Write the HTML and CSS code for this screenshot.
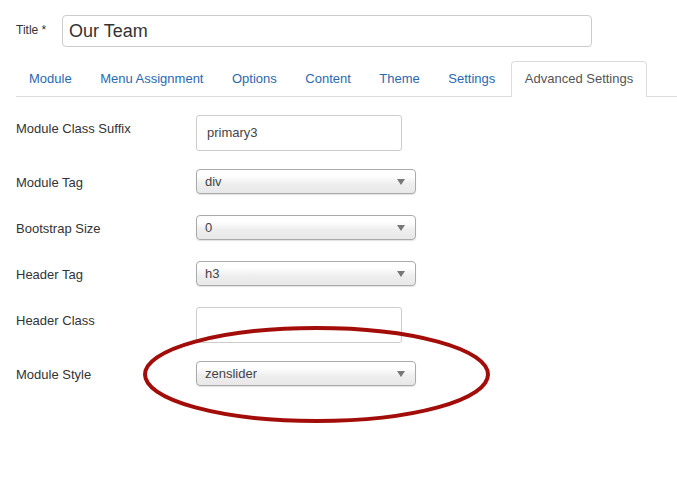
FILE: index.html
```html
<!DOCTYPE html>
<html>
<head>
<meta charset="utf-8">
<link rel="stylesheet" href="styles.css">
</head>
<body>
<div class="page">
  <div class="title-row">
    <label class="title-label">Title *</label>
    <div class="title-input">Our Team</div>
  </div>
  <ul class="tabs">
    <li class="tab">Module</li>
    <li class="tab">Menu Assignment</li>
    <li class="tab">Options</li>
    <li class="tab">Content</li>
    <li class="tab">Theme</li>
    <li class="tab">Settings</li>
    <li class="tab active">Advanced Settings</li>
  </ul>
  <div class="form">
    <div class="row">
      <div class="label">Module Class Suffix</div>
      <div class="text-input">primary3</div>
    </div>
    <div class="row sel">
      <div class="label">Module Tag</div>
      <div class="select"><span>div</span><i class="arrow"></i></div>
    </div>
    <div class="row sel">
      <div class="label">Bootstrap Size</div>
      <div class="select"><span>0</span><i class="arrow"></i></div>
    </div>
    <div class="row sel">
      <div class="label">Header Tag</div>
      <div class="select"><span>h3</span><i class="arrow"></i></div>
    </div>
    <div class="row">
      <div class="label">Header Class</div>
      <div class="text-input"></div>
    </div>
    <div class="row sel">
      <div class="label">Module Style</div>
      <div class="select"><span>zenslider</span><i class="arrow"></i></div>
    </div>
  </div>
  <svg class="circle" width="349" height="100" viewBox="0 0 349 100">
    <ellipse cx="174.5" cy="49.5" rx="171.5" ry="46.5" fill="none" stroke="#a30d09" stroke-width="4"/>
  </svg>
</div>
</body>
</html>
```

FILE: styles.css
```css
* { box-sizing: border-box; }
html, body { margin: 0; padding: 0; background: #fff; }
body {
  font-family: "Liberation Sans", Arial, sans-serif;
  color: #333;
  font-size: 13px;
}
.page {
  position: relative;
  width: 677px;
  height: 501px;
  padding: 15px 0 0 16px;
}
.title-row {
  display: flex;
  align-items: center;
  height: 32px;
}
.title-label {
  width: 46px;
  font-size: 12px;
  color: #333;
  padding-bottom: 2px;
}
.title-input {
  width: 530px;
  height: 32px;
  border: 1px solid #ccc;
  border-radius: 4px;
  font-size: 18px;
  line-height: 30px;
  padding-left: 6px;
  color: #333;
}
.tabs {
  list-style: none;
  margin: 14px 0 0 0;
  padding: 0;
  display: flex;
  border-bottom: 1px solid #ddd;
  height: 36px;
}
.tab {
  padding: 0 12px;
  margin-right: 2.5px;
  line-height: 34px;
  color: #2a69b1;
  border: 1px solid transparent;
  border-bottom: none;
  border-radius: 4px 4px 0 0;
  height: 36px;
}
.tab.active {
  color: #555;
  border-color: #ddd;
  background: #fff;
  padding: 0 13px;
}
.form {
  margin-top: 18px;
  display: flex;
  flex-direction: column;
  gap: 18px;
}
.row {
  display: flex;
  align-items: flex-start;
}
.row.sel { padding-bottom: 3px; }
.label {
  width: 180px;
  padding-top: 5px;
  line-height: 18px;
  color: #333;
}
.text-input {
  width: 206px;
  height: 36px;
  border: 1px solid #ccc;
  border-radius: 3px;
  padding-left: 10px;
  line-height: 34px;
  color: #444;
}
.select {
  position: relative;
  width: 220px;
  height: 25px;
  border: 1px solid #aaa;
  border-radius: 4px;
  background: linear-gradient(#fff 0%, #fff 25%, #eee 60%, #e8e8e8 100%);
  box-shadow: 0 1px 1px rgba(0,0,0,0.12);
  padding-left: 8px;
  line-height: 23px;
  color: #444;
}
.arrow {
  position: absolute;
  right: 10px;
  top: 9px;
  width: 0;
  height: 0;
  border-left: 4px solid transparent;
  border-right: 4px solid transparent;
  border-top: 6px solid #777;
}
.circle {
  position: absolute;
  left: 142px;
  top: 325px;
}
```
